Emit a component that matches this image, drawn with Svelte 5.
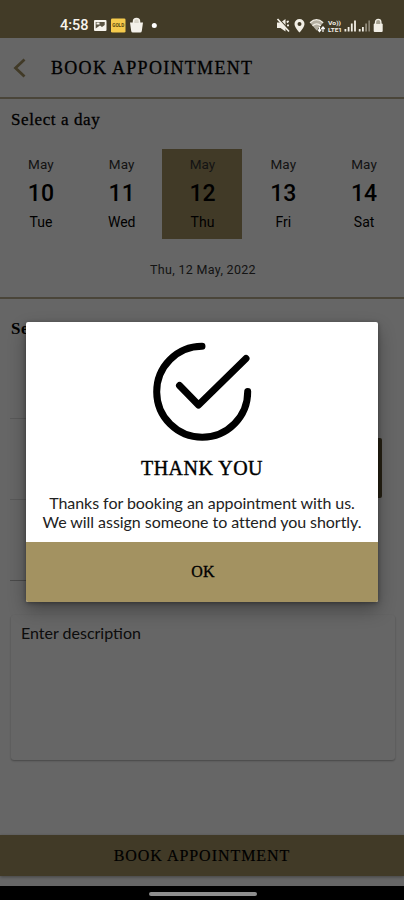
<script lang="ts">
  type Day = { date: number; name: string };

  const days: Day[] = [
    { date: 10, name: 'Tue' },
    { date: 11, name: 'Wed' },
    { date: 12, name: 'Thu' },
    { date: 13, name: 'Fri' },
    { date: 14, name: 'Sat' },
  ];

  let selected = $state(12);
  let open = $state(true);
</script>

<div class="screen">
  <header class="topbar">
    <svg class="back" width="14" height="20" viewBox="0 0 14 20" fill="none" aria-hidden="true">
      <path d="M11.5 1.5 2.5 10l9 8.5" stroke="#a39261" stroke-width="2.8" />
    </svg>
    <h1>BOOK APPOINTMENT</h1>
  </header>

  <section class="day-section">
    <h2>Select a day</h2>
    <div class="days">
      {#each days as day}
        <button class="day" class:selected={selected === day.date} onclick={() => (selected = day.date)}>
          <span class="month">May</span>
          <span class="num">{day.date}</span>
          <span class="name">{day.name}</span>
        </button>
      {/each}
    </div>
    <p class="full-date">Thu, 12 May, 2022</p>
  </section>

  <section class="time-section">
    <h2>Se</h2>
    <div class="slots">
      <div class="slot"><span class="picked"></span></div>
      <div class="slot"></div>
      <div class="slot last"></div>
    </div>
  </section>

  <div class="description">Enter description</div>
  <button class="book">BOOK APPOINTMENT</button>
  <div class="navbar"></div>

  {#if open}
    <div class="overlay">
      <div class="dialog" role="dialog">
        <div class="content">
          <svg class="check" width="100" height="100" viewBox="0 0 100 100" fill="none" aria-hidden="true">
            <g stroke="#000" stroke-width="7" stroke-linecap="round" stroke-linejoin="round">
              <path d="M50 4.200A45.500 45.500 0 1 0 95.700 49.500" />
              <path d="M27.500 43.500 46.500 63 94 16.500" />
            </g>
          </svg>
          <h3>THANK YOU</h3>
          <p class="line one">Thanks for booking an appointment with us.</p>
          <p class="line two">We will assign someone to attend you shortly.</p>
        </div>
        <button class="ok" onclick={() => (open = false)}>OK</button>
      </div>
    </div>
  {/if}

  <!-- system UI is drawn above the dimmed page -->
  <div class="status">
    <span class="clock">4:58</span>
    <svg class="left-icons" width="68" height="18" viewBox="0 0 68 18" aria-hidden="true">
      <rect x="1" y="3" width="12.5" height="11" rx="1" fill="#f7f4ed" />
      <path d="M2.700 5h9v3L9 10 7 8.500l-4.300 3z" fill="#5b5544" />
      <path d="M3.500 5.500h3v2h-3z" fill="#f7f4ed" />
      <rect x="18" y="1.500" width="14.500" height="14" rx="1.300" fill="#f6cb4c" />
      <text x="25.200" y="10.400" text-anchor="middle" textLength="12" lengthAdjust="spacingAndGlyphs">GOLD</text>
      <path d="M37 5.500h13l-1.200 8.500q-.2 1.500-1.700 1.500h-7.200q-1.500 0-1.700-1.500z" fill="#f4f1ea" />
      <path d="M40.500 6V4.500a3 3 0 0 1 6 0V6" fill="#d8d4c8" stroke="#f4f1ea" stroke-width="1.500" />
      <circle cx="61.300" cy="8.500" r="2.500" fill="#fff" />
    </svg>
    <svg class="right-icons" width="110" height="18" viewBox="0 0 110 18" fill="#f1eee5" aria-hidden="true">
      <path d="M1 5.500h3.500L9.500 2v12.500L4.500 11H1z" />
      <path d="m2.500 1.500 11 12" stroke="#423b27" stroke-width="1.300" />
      <path d="m1.500 2 11.500 12.500M10.800 5.500l1.800-1.500M11 8.300h2" stroke="#f1eee5" stroke-width="1.700" />
      <path fill-rule="evenodd" d="M23.500 2a5 5 0 0 0-5 5c0 3.500 5 8.500 5 8.500s5-5 5-8.500a5 5 0 0 0-5-5zm0 3a2 2 0 1 1 0 4 2 2 0 0 1 0-4z" />
      <path d="M34 5.700q6.500-6 13.200 0l-6.600 7.800z" opacity=".65" />
      <path d="M34 5.700q6.500-6 13.200 0M36.500 8.700q4.200-3.600 8.300 0" fill="none" stroke="#f1eee5" stroke-width="1.200" />
      <path d="M43.500 10v4.500M41.800 12.500l1.700 2 1.700-2M47 15v-4.500M45.300 12l1.700-2 1.700 2" fill="none" stroke="#fff" stroke-width="1.200" />
      <text class="lte" x="52" y="7.500" textLength="13" lengthAdjust="spacingAndGlyphs">Vo))</text>
      <text class="lte" x="52" y="15" textLength="14" lengthAdjust="spacingAndGlyphs">LTE1</text>
      <path d="M68.500 12h1.800v2.500h-1.800zM71.700 10h1.800v4.500h-1.800zM74.900 6.500h1.800v8h-1.800zM78.100 3.500h1.800v11h-1.800z" />
      <path d="M82.800 12h1.800v2.500h-1.800zM86 10h1.800v4.500H86z" />
      <path d="M89.200 6.500H91v8h-1.800zM92.400 3.500h1.500v11h-1.500z" opacity=".45" />
      <rect x="97.700" y="6.500" width="9" height="8.500" rx="1" />
      <path d="M99.500 7V5a2.700 2.700 0 0 1 5.400 0v2" fill="#a5a08f" stroke="#f1eee5" stroke-width="1.300" />
    </svg>
  </div>
</div>

<style>
  :global(body) {
    margin: 0;
    background: #000;
  }

  h1,
  h2,
  h3,
  p {
    margin: 0;
    white-space: nowrap;
  }

  button {
    border: 0;
    padding: 0;
    font: inherit;
    color: inherit;
    cursor: pointer;
  }

  .screen {
    position: relative;
    display: flex;
    flex-direction: column;
    width: 404px;
    height: 900px;
    overflow: hidden;
    padding-top: 38px;
    box-sizing: border-box;
    background: #fff;
    color: #000;
    font-family: Roboto, sans-serif;
  }

  .topbar {
    display: flex;
    align-items: center;
    height: 61px;
    box-sizing: border-box;
    padding-left: 13px;
    border-bottom: 2px solid #b8ad8e;
  }

  h1 {
    margin-left: 24px;
    font: 400 18px/24px 'Liberation Serif', serif;
    letter-spacing: 1.3px;
    -webkit-text-stroke: 0.3px #000;
  }

  h2 {
    padding-left: 11px;
    font: 400 17px/20px 'Liberation Serif', serif;
    letter-spacing: 0.6px;
    -webkit-text-stroke: 0.3px #000;
  }

  .day-section {
    height: 200px;
    box-sizing: border-box;
    padding-top: 11px;
    border-bottom: 2px solid #b8ad8e;
  }

  .days {
    display: grid;
    grid-template-columns: repeat(5, 1fr);
    margin-top: 19px;
  }

  .day {
    display: flex;
    flex-direction: column;
    align-items: center;
    height: 90px;
    padding-left: 1px;
    background: transparent;
  }

  .day.selected {
    background: #a39261;
  }

  .month {
    margin-top: 7px;
    font-size: 13.5px;
    line-height: 16px;
    letter-spacing: 0.1px;
    color: #333;
  }

  .num {
    margin-top: 8px;
    font-size: 23px;
    font-weight: 500;
    line-height: 28px;
  }

  .name {
    margin-top: 6px;
    font-size: 14px;
    line-height: 16px;
  }

  .full-date {
    margin-top: 22px;
    padding-left: 2px;
    text-align: center;
    font-size: 12.5px;
    line-height: 17px;
    letter-spacing: 0.32px;
    color: #333;
  }

  .time-section {
    height: 316px;
    box-sizing: border-box;
    padding-top: 20px;
  }

  .time-section h2 {
    font-weight: 700;
    -webkit-text-stroke: 0;
  }

  .slots {
    width: 372px;
    margin-left: 10px;
    padding-top: 79px;
  }

  .slot {
    display: flex;
    justify-content: flex-end;
    height: 81px;
    box-sizing: border-box;
    background: linear-gradient(#dedede, #dedede) 0 0 / 360px 1px no-repeat;
  }

  .slot.last {
    background-image: linear-gradient(#b8b8b8, #b8b8b8);
  }

  .picked {
    width: 80px;
    height: 60px;
    margin-top: 20px;
    border-radius: 2px;
    background: #5c5230;
  }

  .description {
    height: 145px;
    margin: 0 9px 0 11px;
    padding: 8px 10px;
    box-sizing: border-box;
    border-radius: 3px;
    background: #fff;
    box-shadow: 0 1px 2px rgba(0, 0, 0, 0.32);
    font: 400 16px/20px Lato, sans-serif;
    color: #222;
  }

  .book {
    height: 41px;
    margin-top: 75px;
    background: #a39261;
    box-shadow: 0 1px 3px rgba(0, 0, 0, 0.35);
    font: 400 16px/41px 'Liberation Serif', serif;
    letter-spacing: 0.95px;
    -webkit-text-stroke: 0.2px #000;
  }

  .navbar {
    position: relative;
    z-index: 3;
    display: flex;
    justify-content: center;
    height: 14px;
    margin-top: 10px;
    background: #000;
  }

  .navbar::before {
    content: '';
    width: 108px;
    height: 4px;
    margin-top: 6px;
    margin-left: 2px;
    border-radius: 2px;
    background: #8e8e8e;
  }

  .overlay {
    position: absolute;
    z-index: 1;
    inset: 0;
    display: flex;
    justify-content: center;
    align-items: flex-start;
    padding-top: 322px;
    background: rgba(0, 0, 0, 0.6);
  }

  .dialog {
    width: 352px;
    height: 280px;
    overflow: hidden;
    border-radius: 2px;
    background: #fff;
    box-shadow: 0 8px 18px rgba(0, 0, 0, 0.32), 0 1px 4px rgba(0, 0, 0, 0.35);
  }

  .content {
    display: flex;
    flex-direction: column;
    align-items: center;
    height: 220px;
  }

  .check {
    flex: none;
    margin-top: 20px;
  }

  h3 {
    margin-top: 14px;
    font: 400 20px/24px 'Liberation Serif', serif;
    letter-spacing: 0.5px;
    -webkit-text-stroke: 0.4px #000;
  }

  .line {
    font: 400 16px/19px Lato, sans-serif;
    letter-spacing: -0.05px;
    color: #222;
  }

  .line.one {
    margin-top: 13px;
  }

  .ok {
    width: 100%;
    height: 60px;
    padding-left: 2px;
    background: #a39261;
    font: 400 16px/60px 'Liberation Serif', serif;
    letter-spacing: 0.3px;
    -webkit-text-stroke: 0.3px #000;
  }

  .status {
    position: absolute;
    z-index: 2;
    top: 0;
    left: 0;
    display: flex;
    align-items: center;
    width: 404px;
    height: 38px;
    box-sizing: border-box;
    padding: 13px 18px 0 60px;
    background: #423b27;
    color: #f7f4ed;
  }

  .clock {
    width: 33px;
    font-size: 14.5px;
    font-weight: 500;
    line-height: 18px;
  }

  .right-icons {
    margin-left: auto;
  }

  .left-icons text {
    font: 700 4.5px Roboto, sans-serif;
    fill: #5a4510;
  }

  .right-icons .lte {
    font: 700 6.2px Roboto, sans-serif;
  }
</style>
